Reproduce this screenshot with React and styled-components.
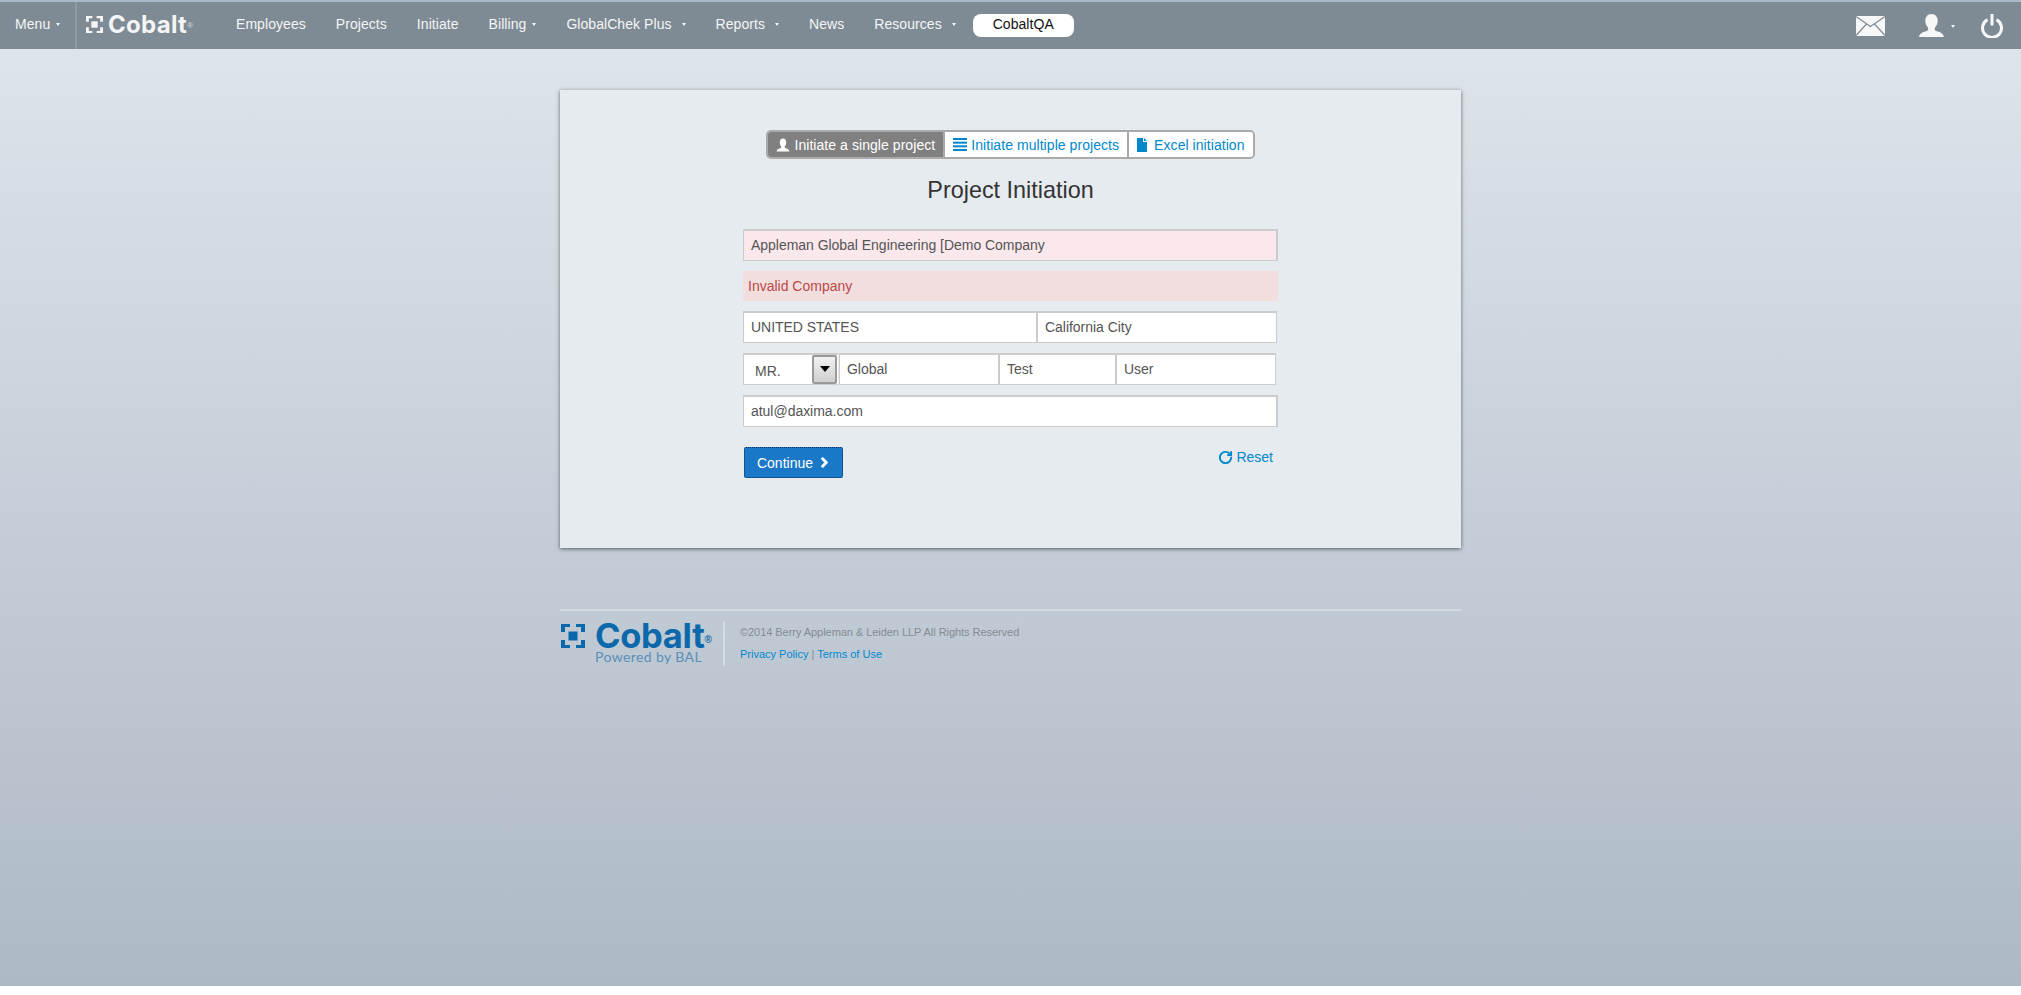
import React from 'react';
import styled, { createGlobalStyle } from 'styled-components';
import { FaChevronRight } from 'react-icons/fa';
import { RotateCw } from 'lucide-react';

/***** Page style *****/
const Global = createGlobalStyle`
   html, body { margin:0; padding:0; background:#fff; }
   body { font-family:"Liberation Sans", Arial, sans-serif; font-size:14px; color:#555; }
   * { box-sizing:border-box; }
`
const Page = styled.div`
   height:986px;
   overflow:hidden;
   background:linear-gradient(to bottom, #dfe6ec 0, #dde4ea 49px, #adb9c6 100%);
`

/***** Top bar *****/
const Bar = styled.nav`
   height:49px;
   display:flex;
   align-items:center;
   background:#7f8b94;
   border-top:2px solid #a9b9cd;
   color:#f4f5f6;
   letter-spacing:.06px;
`
const MenuBlock = styled.div`
   width:77px;
   height:100%;
   padding:0 0 4px 15px;
   display:flex;
   align-items:center;
   border-right:2px solid #8f9aa2;
`
const LogoBlock = styled.div`
   width:144px;
   padding:0 0 2px 9px;
   display:flex;
   align-items:center;
   gap:5px;
`
const LogoWord = styled.span`
   font-family:Inter, "Liberation Sans", sans-serif;
   font-weight:700;
   font-size:${props => props.$size}px;
   letter-spacing:${props => props.$spacing}px;
   line-height:.8;
   color:${props => props.$color};
`
const Reg = styled.span`
   align-self:flex-end;
   margin:0 0 ${props => props.$bottom}px ${props => props.$left}px;
   font-size:${props => props.$size}px;
   font-weight:700;
   line-height:1;
   color:${props => props.$color};
`
const NavItem = styled.a`
   display:flex;
   align-items:center;
   padding:0 15px 4px;
   white-space:nowrap;
`
const Caret = styled.i`
   display:inline-block;
   margin-left:${props => props.$wide ? 10 : 6}px;
   margin-top:2px;
   border-left:2.5px solid transparent;
   border-right:2.5px solid transparent;
   border-top:3px solid #f4f5f6;
`
const Pill = styled.a`
   width:101px;
   height:23px;
   margin:-1px 0 0 2px;
   padding-bottom:2px;
   border-radius:8px;
   background:#fff;
   color:#111;
   display:flex;
   align-items:center;
   justify-content:center;
`
const BarIcons = styled.div`
   margin-left:auto;
   padding-right:18px;
   display:flex;
   align-items:center;
`
const UserMenu = styled.div`
   display:flex;
   align-items:center;
   margin:0 26px 0 33px;
`

/***** Card *****/
const Card = styled.main`
   width:901px;
   height:458px;
   margin:41px auto 0;
   padding-top:40px;
   background:#e6ebf0;
   box-shadow:0 1px 4px rgba(0,0,0,.55);
   display:flex;
   flex-direction:column;
   align-items:center;
`
const Tabs = styled.div`
   display:flex;
   height:29px;
   border:2px solid #aaa;
   border-radius:5px;
   overflow:hidden;
   letter-spacing:.06px;
`
const Tab = styled.a`
   display:flex;
   align-items:center;
   gap:${props => props.$gap}px;
   padding:0 8px;
   background:${props => props.$active ? '#808080' : '#fff'};
   color:${props => props.$active ? '#fff' : '#0088cc'};
   & + & { border-left:2px solid #aaa; }
`
const Title = styled.h1`
   margin:14px 0 22px;
   font-size:23.4px;
   line-height:34px;
   font-weight:400;
   color:#333;
`
const Form = styled.form`
   width:535px;
   display:flex;
   flex-direction:column;
   gap:10px;
`
const Row = styled.div`
   display:flex;
`
const Field = styled.div`
   width:${props => props.$width ? props.$width + 'px' : '100%'};
   height:32px;
   padding:0 0 1px 7px;
   display:flex;
   align-items:center;
   background:${props => props.$invalid ? '#fae8ec' : '#fff'};
   border:1px solid #ccc;
   border-top-width:2px;
   border-right-width:${props => props.$heavy ? 2 : 1}px;
   color:#555;
   white-space:nowrap;
   letter-spacing:-.03px;
`
const ErrorBox = styled.div`
   height:30px;
   padding-left:5px;
   display:flex;
   align-items:center;
   background:#f2dede;
   color:#b94a48;
`
const SelectBox = styled.div`
   width:95px;
   height:32px;
   margin-right:1px;
   padding:0 1px 0 11px;
   display:flex;
   align-items:center;
   justify-content:space-between;
   background:#fff;
   border:1px solid #ccc;
   border-top-width:2px;
   border-right:0;
   color:#555;
`
const SelectValue = styled.span`
   padding-top:3px;
`
const SelectArrow = styled.span`
   width:25px;
   height:29px;
   display:flex;
   justify-content:center;
   padding-top:9px;
   background:linear-gradient(to bottom, #f1f1f1, #cfcfcf);
   border:2px solid #999;
   border-radius:2px;
   &::after {
      content:'';
      width:0;
      height:0;
      border-left:5px solid transparent;
      border-right:5px solid transparent;
      border-top:6px solid #000;
   }
`
const Actions = styled.div`
   margin-top:10px;
   display:flex;
   justify-content:space-between;
   align-items:flex-start;
`
const Continue = styled.button`
   margin-left:1px;
   width:99px;
   height:31px;
   padding:0;
   display:flex;
   align-items:center;
   justify-content:center;
   gap:6px;
   font:14px "Liberation Sans", Arial, sans-serif;
   color:#fff;
   background:#1b78c8;
   border:1px dotted #0b2f55;
   border-radius:2px;
`
const Reset = styled.a`
   margin:2px 5px 0 0;
   display:flex;
   align-items:center;
   gap:3px;
   color:#0088cc;
`

/***** Footer *****/
const Footer = styled.footer`
   width:901px;
   margin:61px auto 0;
   padding-top:11px;
   border-top:2px solid #d5dbe1;
   display:flex;
   align-items:flex-start;
`
const BrandBlock = styled.div`
   width:165px;
   height:44px;
   padding-left:1px;
   border-right:2px solid #d5dbe1;
`
const BrandTop = styled.div`
   height:27px;
   display:flex;
   align-items:center;
   gap:10px;
`
const Powered = styled.div`
   margin-left:34px;
   font-family:Lato, "Liberation Sans", sans-serif;
   font-size:14px;
   line-height:15px;
   letter-spacing:.4px;
   color:#5a8fb8;
`
const Legal = styled.div`
   padding:3px 0 0 15px;
   font-size:11px;
   color:#838c95;
`
const Copy = styled.div`
   height:22px;
   line-height:14px;
   letter-spacing:-.05px;
`
const LinksLine = styled.div`
   line-height:14px;
`
const Link = styled.a`
   color:#0088cc;
`

/***** Drawings *****/
const CobaltMark = ({ size, color }) => (
   <svg width={size} height={size} viewBox="0 0 24 24" fill={color}>
      <rect x="7.5" y="7.5" width="9" height="9" />
      <path d="M0 0h9v3H4v5H0z" />
      <path d="M24 0h-9v3h5v5h4z" />
      <path d="M0 24h9v-3H4v-5H0z" />
      <path d="M24 24h-9v-3h5v-5h4z" />
   </svg>
)
const USER = 'M12 1c3.5 0 5.5 2.6 5.5 6.2 0 2.6-1 5-2.6 6.3v1.6c0 .8.6 1.2 2 1.7 3 1 5.5 2 6.1 5.2H.9c.6-3.2 3.1-4.2 6.1-5.2 1.4-.5 2-.9 2-1.7v-1.6C7.5 12.2 6.5 9.8 6.5 7.2 6.5 3.6 8.5 1 12 1z'
const UserIcon = ({ width, height, color }) => (
   <svg width={width} height={height} viewBox="0 0 24 23" preserveAspectRatio="none" fill={color}>
      <path d={USER} />
   </svg>
)
const ListIcon = () => (
   <svg width="14" height="13" viewBox="0 0 14 13" fill="#0088cc">
      <rect y="0" width="14" height="2" />
      <rect y="3.67" width="14" height="2" />
      <rect y="7.33" width="14" height="2" />
      <rect y="11" width="14" height="2" />
   </svg>
)
const FileIcon = () => (
   <svg width="10" height="14" viewBox="0 0 10 14" fill="#0088cc">
      <path d="M0 0h6v4h4v10H0z" />
      <path d="M7 0l3 3H7z" />
   </svg>
)
const MailIcon = () => (
   <svg width="29" height="20" viewBox="0 0 29 20">
      <rect width="29" height="20" fill="#f7f7f7" />
      <path d="M0 .5l14.5 10L29 .5M0 19.5L10.5 8M29 19.5L18.5 8" fill="none" stroke="#7f8b94" strokeWidth="1.2" />
   </svg>
)
const PowerIcon = () => (
   <svg width="22" height="24" viewBox="0 0 22 24" fill="none" stroke="#f7f7f7" strokeWidth="3">
      <path d="M6.5 5.6a9.5 9.5 0 1 0 9 0" />
      <path d="M11 0v11.5" />
   </svg>
)
/****** ******************** *****/

const links = [
   { name:'Employees' },
   { name:'Projects' },
   { name:'Initiate' },
   { name:'Billing', caret:true },
   { name:'GlobalChek Plus', caret:true, wide:true },
   { name:'Reports', caret:true, wide:true },
   { name:'News' },
   { name:'Resources', caret:true, wide:true },
]

const App = () => {
   return(
      <Page>
         <Global />
         <Bar>
            <MenuBlock>Menu<Caret /></MenuBlock>
            <LogoBlock>
               <CobaltMark size={17} color="#f4f5f6" />
               <LogoWord $size={24} $spacing={.3} $color="#f4f5f6">Cobalt</LogoWord>
               <Reg $size={8} $bottom={4} $left={-5} $color="#c8ced2">®</Reg>
            </LogoBlock>
            {links.map((link, i) => (
               <NavItem key={i}>
                  {link.name}
                  {link.caret ? <Caret $wide={link.wide} /> : null}
               </NavItem>
            ))}
            <Pill>CobaltQA</Pill>
            <BarIcons>
               <MailIcon />
               <UserMenu>
                  <UserIcon width={27} height={25} color="#f7f7f7" />
                  <Caret />
               </UserMenu>
               <PowerIcon />
            </BarIcons>
         </Bar>

         <Card>
            <Tabs>
               <Tab $active $gap={4}><UserIcon width={14} height={14} color="#fff" />Initiate a single project</Tab>
               <Tab $gap={4}><ListIcon />Initiate multiple projects</Tab>
               <Tab $gap={7}><FileIcon />Excel initiation</Tab>
            </Tabs>
            <Title>Project Initiation</Title>
            <Form>
               <Field $invalid $heavy>Appleman Global Engineering [Demo Company</Field>
               <ErrorBox>Invalid Company</ErrorBox>
               <Row>
                  <Field $width={294}>UNITED STATES</Field>
                  <Field $width={240}>California City</Field>
               </Row>
               <Row>
                  <SelectBox>
                     <SelectValue>MR.</SelectValue>
                     <SelectArrow />
                  </SelectBox>
                  <Field $width={160}>Global</Field>
                  <Field $width={117}>Test</Field>
                  <Field $width={160}>User</Field>
               </Row>
               <Field $heavy>atul@daxima.com</Field>
               <Actions>
                  <Continue type="button">Continue <FaChevronRight size={11} stroke="#fff" strokeWidth={50} /></Continue>
                  <Reset><RotateCw size={15} strokeWidth={3} />Reset</Reset>
               </Actions>
            </Form>
         </Card>

         <Footer>
            <BrandBlock>
               <BrandTop>
                  <CobaltMark size={24} color="#0a68ab" />
                  <LogoWord $size={34.5} $spacing={-0.3} $color="#0a68ab">Cobalt</LogoWord>
                  <Reg $size={10} $bottom={4} $left={-10} $color="#0a68ab">®</Reg>
               </BrandTop>
               <Powered>Powered by BAL</Powered>
            </BrandBlock>
            <Legal>
               <Copy>©2014 Berry Appleman &amp; Leiden LLP All Rights Reserved</Copy>
               <LinksLine><Link>Privacy Policy</Link> | <Link>Terms of Use</Link></LinksLine>
            </Legal>
         </Footer>
      </Page>
   )
}

export default App
